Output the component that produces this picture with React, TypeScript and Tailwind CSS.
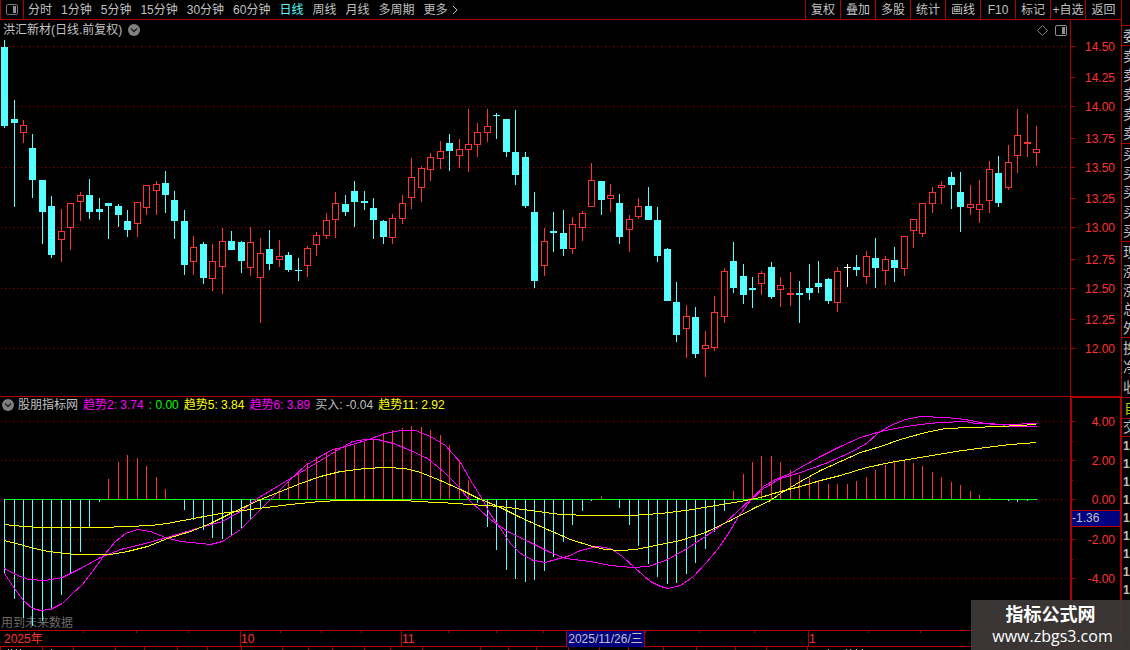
import clsx from "clsx";

type Candle = [high: number, top: number, bottom: number, low: number, kind: "u" | "d" | "w"];

const UP = "#ff3232";
const DOWN = "#54ffff";
const LINE = "#b00000";

const candles: Candle[] = [
  [40, 47, 126, 128, "d"], [100, 119, 123, 207, "d"], [120, 125, 133, 143, "u"], [134, 148, 180, 198, "d"],
  [180, 180, 212, 244, "d"], [196, 206, 255, 258, "d"], [209, 231, 240, 262, "u"], [203, 203, 228, 250, "u"],
  [192, 195, 202, 221, "u"], [179, 195, 212, 219, "d"], [198, 209, 212, 220, "d"], [203, 203, 206, 239, "d"],
  [204, 206, 215, 227, "d"], [210, 221, 230, 237, "d"], [202, 202, 224, 237, "u"], [185, 185, 208, 215, "u"],
  [181, 184, 191, 215, "u"], [171, 183, 195, 213, "d"], [191, 200, 221, 239, "d"], [210, 221, 265, 275, "d"],
  [236, 247, 262, 275, "u"], [242, 244, 278, 284, "d"], [244, 261, 279, 291, "u"], [228, 241, 267, 294, "u"],
  [231, 241, 250, 250, "d"], [241, 242, 261, 273, "d"], [227, 242, 268, 276, "u"], [238, 253, 278, 323, "u"],
  [230, 249, 264, 270, "d"], [240, 256, 260, 267, "u"], [252, 255, 270, 272, "d"], [258, 270, 271, 281, "d"],
  [246, 248, 266, 277, "u"], [232, 235, 245, 256, "u"], [213, 220, 236, 239, "u"], [192, 203, 220, 238, "u"],
  [195, 204, 212, 216, "d"], [181, 191, 202, 227, "d"], [191, 201, 203, 210, "d"], [198, 208, 220, 239, "d"],
  [220, 221, 237, 244, "d"], [214, 218, 238, 244, "u"], [195, 203, 219, 224, "u"], [158, 177, 198, 209, "u"],
  [166, 168, 188, 202, "u"], [153, 157, 170, 181, "u"], [141, 151, 159, 169, "u"], [134, 143, 151, 171, "d"],
  [139, 149, 156, 168, "u"], [109, 144, 150, 172, "u"], [123, 132, 145, 157, "u"], [109, 126, 133, 142, "u"],
  [113, 115, 116, 139, "d"], [119, 119, 152, 157, "d"], [110, 152, 175, 185, "d"], [152, 157, 206, 208, "d"],
  [192, 212, 281, 288, "d"], [228, 241, 266, 276, "u"], [212, 231, 233, 252, "d"], [210, 233, 249, 256, "d"],
  [217, 224, 249, 254, "u"], [211, 213, 228, 241, "u"], [163, 180, 207, 207, "u"], [181, 181, 200, 215, "d"],
  [184, 195, 199, 212, "u"], [194, 203, 237, 244, "d"], [215, 219, 230, 252, "u"], [198, 206, 217, 219, "u"],
  [187, 206, 220, 220, "d"], [207, 220, 256, 262, "d"], [248, 249, 301, 301, "d"], [282, 302, 335, 342, "d"],
  [305, 316, 329, 358, "u"], [307, 317, 354, 358, "d"], [331, 345, 349, 377, "u"], [296, 312, 348, 351, "u"],
  [268, 271, 317, 323, "u"], [242, 261, 288, 293, "d"], [264, 276, 295, 304, "d"], [277, 288, 290, 308, "d"],
  [271, 273, 284, 295, "u"], [262, 267, 297, 299, "d"], [277, 285, 290, 307, "u"], [272, 293, 295, 306, "u"],
  [281, 293, 295, 323, "d"], [264, 288, 293, 300, "d"], [261, 283, 287, 293, "d"], [278, 279, 301, 304, "d"],
  [267, 271, 303, 312, "u"], [264, 267, 268, 287, "w"], [255, 267, 270, 276, "d"], [251, 256, 277, 284, "u"],
  [238, 258, 268, 288, "d"], [256, 259, 271, 285, "u"], [247, 260, 268, 282, "d"], [236, 236, 269, 276, "u"],
  [219, 219, 231, 248, "u"], [203, 203, 234, 237, "u"], [187, 192, 204, 213, "u"], [181, 185, 188, 204, "u"],
  [172, 177, 185, 209, "d"], [172, 192, 207, 232, "d"], [185, 204, 208, 215, "u"], [180, 204, 210, 223, "u"],
  [161, 169, 201, 213, "u"], [156, 173, 203, 207, "d"], [145, 162, 188, 190, "u"], [109, 135, 156, 173, "u"],
  [114, 142, 144, 157, "u"], [126, 149, 153, 166, "u"],
];

// tip of every histogram bar, the base line is ZERO
const ZERO = 499;
const bars = [
  574, 599, 618, 626, 621, 610, 595, 574, 552, 527, 502, 479, 462, 455, 458, 466, 477, 489, 500, 510, 520, 530,
  538, 539, 536, 529, 519, 510, 500, 492, 482, 473, 463, 457, 452, 448, 447, 445, 442, 439, 433, 430, 428, 426,
  427, 430, 435, 445, 460, 480, 503, 527, 550, 570, 579, 582, 580, 571, 557, 542, 525, 511, 501, 496, 499, 508,
  525, 546, 564, 577, 584, 583, 574, 563, 549, 532, 511, 491, 474, 462, 456, 456, 462, 470, 475, 478, 480, 484,
  484, 484, 481, 477, 470, 465, 462, 461, 463, 466, 472, 477, 482, 485, 491, 495, 498, 499, 501, 502, 501, 500,
];

const trend11 =
  "4,524 23,526 42,527 60,527 100,527 127,526 150,525 167,523 193,518 220,513 250,509 290,504 320,501 340,500 405,500 415,501 440,502 470,504 500,506 530,510 560,514 590,515 630,515 660,513 685,510 710,506 740,501 760,497 780,491 800,486 820,480 840,475 866,467 890,462 920,457 955,451 985,447 1010,444 1036,442";
const trend5 =
  "4,540 23,545 42,550 56,552 75,554 110,554 127,551 147,546 167,538 190,531 210,523 230,513 245,506 260,499 280,491 300,483 320,476 340,471 365,468 385,467 405,468 420,472 440,480 460,489 478,498 500,507 520,517 540,526 570,539 592,546 605,549 620,550 635,549 650,546 680,540 705,532 730,520 755,507 770,500 780,493 800,481 820,470 840,461 860,452 880,446 900,439 925,432 945,428 970,427 1000,426 1036,424";
const trend2 =
  "4,573 14,588 23,600 32,608 40,610 50,609 62,603 72,593 82,584 92,571 105,553 115,541 125,533 137,529 150,531 165,537 180,541 210,544 222,541 240,529 260,509 270,499 280,489 292,477 305,465 315,459 330,450 345,446 365,440 385,433 400,430 415,430 430,436 445,445 460,462 472,483 482,499 490,514 500,528 510,543 520,553 533,560 545,562 555,559 567,556 580,550 597,546 610,548 622,556 635,568 650,581 660,586 668,588 680,585 693,576 705,563 717,549 728,533 738,516 750,500 763,488 780,478 800,472 825,463 850,452 866,443 877,433 890,425 905,419 920,416 945,417 965,419 985,423 1004,424 1021,424 1022,423 1036,423";
const trend6 =
  "4,568 15,574 28,579 45,580 62,577 80,568 100,557 120,549 145,543 170,536 200,527 222,521 240,511 257,498 280,484 300,472 320,460 335,451 345,445 352,441 365,439 377,439 393,443 410,450 427,458 443,471 458,486 470,501 490,519 507,531 530,542 550,552 565,558 590,561 610,565 632,567 648,566 665,560 685,549 705,536 725,522 738,510 750,499 763,486 775,479 790,473 800,467 820,456 840,446 860,437 880,431 900,427 920,424 940,422 965,421 975,423 1003,424 1004,426 1036,426";

const priceLabels: [string, number][] = [
  ["14.50", 46], ["14.25", 77], ["14.00", 106], ["13.75", 138], ["13.50", 167], ["13.25", 198],
  ["13.00", 227], ["12.75", 259], ["12.50", 288], ["12.25", 319], ["12.00", 348],
];
const trendLabels: [string, number][] = [
  ["4.00", 421], ["2.00", 460], ["0.00", 499], ["-2.00", 539], ["-4.00", 578],
];

const periods = ["分时", "1分钟", "5分钟", "15分钟", "30分钟", "60分钟", "日线", "周线", "月线", "多周期"];
const tools = ["复权", "叠加", "多股", "统计", "画线", "F10", "标记", "+自选"];

const quoteGroups = [
  { rows: ["委"], height: "h-[20px]" },
  { rows: ["卖", "卖", "卖", "卖", "卖"], height: "h-[98px]" },
  { rows: ["买", "买", "买", "买", "买"], height: "h-[98px]" },
  { rows: ["现", "涨", "涨", "总", "外"], height: "h-[96px]" },
  { rows: ["换", "净", "收"], height: "h-[60px]" },
];

const xOf = (i: number) => Math.round(4.04 + i * 9.468);

function Grid({ ys }: { ys: number[] }) {
  return (
    <>
      {ys.map((y) => (
        <line key={y} x1="1" x2="1068" y1={y + 0.5} y2={y + 0.5} stroke="#a00000" strokeDasharray="1 3" />
      ))}
    </>
  );
}

function CandleChart() {
  return (
    <svg className="block h-full w-full" viewBox="0 40 1070 356" preserveAspectRatio="none" shapeRendering="crispEdges">
      <Grid ys={[46, 106, 167, 227, 288, 348]} />
      {candles.map(([high, top, bottom, low, kind], i) => {
        const x = xOf(i);
        const color = kind === "u" ? UP : kind === "d" ? DOWN : "#ffffff";
        const hollow = kind === "u" && bottom - top > 2;
        return (
          <g key={i} fill={color}>
            <rect x={x} y={high} width="1" height={top - high} />
            <rect x={x} y={bottom} width="1" height={low - bottom} />
            {hollow ? (
              <rect x={x - 2.5} y={top + 0.5} width="6" height={bottom - top - 1} fill="none" stroke={color} />
            ) : (
              <rect x={x - 3} y={top} width="7" height={bottom - top} />
            )}
          </g>
        );
      })}
    </svg>
  );
}

function TrendChart() {
  return (
    <svg className="block h-full w-full" viewBox="0 413 1070 217" preserveAspectRatio="none" shapeRendering="crispEdges">
      <Grid ys={[421, 460, 499, 539, 578]} />
      <text x="1" y="627" fontSize="12" fill="#6b6b6b">用到未来数据</text>
      <rect x="4" y={ZERO} width="1033" height="1" fill="#00ff00" />
      {bars.map((y, i) => (
        <rect
          key={i}
          x={xOf(i)}
          y={Math.min(y, ZERO)}
          width="1"
          height={Math.abs(y - ZERO)}
          fill={y > ZERO ? DOWN : UP}
        />
      ))}
      <g fill="none" transform="translate(0.5 0.5)">
        <polyline points={trend2} stroke="#ff00ff" />
        <polyline points={trend6} stroke="#ff00ff" />
        <polyline points={trend5} stroke="#ffff00" />
        <polyline points={trend11} stroke="#ffff00" />
      </g>
    </svg>
  );
}

function AxisLabels({ labels, minor }: { labels: [string, number][]; minor?: number[] }) {
  return (
    <>
      {labels.map(([text, y]) => (
        <g key={text}>
          <rect x="0" y={y} width="4" height="1" fill={LINE} />
          <text x="44" y={y + 5} fontSize="12" textAnchor="end" fill={UP}>{text}</text>
        </g>
      ))}
      {minor?.map((y) => <rect key={y} x="0" y={y} width="2" height="1" fill={LINE} />)}
    </>
  );
}

function MenuDot({ label }: { label: string }) {
  return (
    <button aria-label={label} className="shrink-0">
      <svg width="12" height="12" viewBox="0 0 12 12">
        <circle cx="6" cy="6" r="6" fill="#808080" />
        <path d="M3 4.5 6 7.5 9 4.5" fill="none" stroke="#202020" strokeWidth="1.4" />
      </svg>
    </button>
  );
}

function PanelIcon({ dim }: { dim?: boolean }) {
  return (
    <svg width="12" height="11" viewBox="0 0 12 11">
      <rect x="0.5" y="0.5" width="11" height="10" rx="1.5" fill="none" stroke={dim ? "#777" : "#909090"} />
      <rect x="7" y="2" width="3" height="7" fill="#909090" />
    </svg>
  );
}

function Header() {
  return (
    <header className="flex h-5 shrink-0 justify-between border-b border-[#b00000] whitespace-nowrap">
      <nav className="flex items-center gap-[9px]">
        <button aria-label="侧栏" className="-mr-[5px] flex h-full w-6 items-center justify-center border-x border-[#b00000]">
          <PanelIcon dim />
        </button>
        {periods.map((p) => (
          <button key={p} className={clsx(p === "日线" && "text-[#54ffff]")}>
            {p}
          </button>
        ))}
        <button className="flex items-center gap-1">
          更多
          <svg width="6" height="10" viewBox="0 0 6 10">
            <path d="M1 1 5 5 1 9" fill="none" stroke="#c0c0c0" />
          </svg>
        </button>
      </nav>
      <div className="flex">
        {tools.map((tool) => (
          <button key={tool} className="w-[35px] border-l border-[#b00000]">
            {tool}
          </button>
        ))}
        <button className="w-9 border-l border-[#b00000]">返回</button>
      </div>
    </header>
  );
}

function DateAxis() {
  return (
    <div className="relative grid h-4 shrink-0 grid-cols-[240fr_161fr_165fr_79fr_163fr_313fr] border-b border-[#b00000] leading-4 text-[#ff3232]">
      <span className="pl-1">2025年</span>
      <span className="border-l border-[#b00000]">10</span>
      <span className="border-l border-[#b00000]">11</span>
      <span className="border-x border-[#b00000] bg-[#000080] text-center whitespace-nowrap text-[#c0c0c0]">
        2025/11/26/三
      </span>
      <span />
      <span className="border-l border-[#b00000]">1</span>
      <svg className="absolute inset-0 h-full w-full" viewBox="0 0 1121 15" preserveAspectRatio="none" shapeRendering="crispEdges">
        {[83, 136, 188, 280, 321, 361, 448, 496, 543, 645, 699, 754, 868, 920].map((x) => (
          <rect key={x} x={x} y="0" width="1" height="2" fill={LINE} />
        ))}
      </svg>
    </div>
  );
}

function BottomTicks() {
  return (
    <svg className="block h-[3px] w-full shrink-0" viewBox="0 0 1121 3" preserveAspectRatio="none" shapeRendering="crispEdges">
      {[0, 42, 73, 115, 144, 177, 207, 241, 282, 308, 332, 364, 390, 422, 480, 508, 536, 568, 599, 628, 663, 696, 735, 766, 807].map((x) => (
        <rect key={x} x={x} y="0" width="1" height="3" fill={LINE} />
      ))}
      {[8, 11, 16, 20, 51, 828, 846, 850, 856, 862].map((x) => (
        <rect key={x} x={x} y="2" width="1" height="1" fill="#c0c0c0" />
      ))}
    </svg>
  );
}

function QuoteSidebar() {
  return (
    <aside className="flex w-[9px] shrink-0 flex-col overflow-hidden border-l border-[#b00000] pt-[25px]">
      {quoteGroups.map(({ rows, height }) => (
        <div key={rows[0]} className={clsx("flex shrink-0 flex-col justify-around border-t border-[#b00000] pl-px text-sm leading-4", height)}>
          {rows.map((row, i) => (
            <span key={i} className="w-4">{row}</span>
          ))}
        </div>
      ))}
      <div className="h-[21px] shrink-0 border-t border-[#b00000] pl-0.5 text-sm leading-5 text-[#c8c800]">
        <span className="block w-4">自</span>
      </div>
      <div className="h-[19px] shrink-0 border-y border-[#b00000] pl-px text-sm leading-4">
        <span className="block w-4">交</span>
      </div>
      <div className="flex flex-col pl-px font-bold leading-[18px]">
        {Array.from({ length: 9 }, (_, i) => (
          <span key={i}>1</span>
        ))}
      </div>
    </aside>
  );
}

export default function App() {
  return (
    <div className="relative flex h-screen overflow-hidden bg-black font-['Liberation_Sans','Noto_Sans_CJK_SC',sans-serif] text-xs text-[#c0c0c0]">
      <main className="flex min-w-0 flex-1 flex-col">
        <Header />

        <section className="flex min-h-0 flex-1 border-b border-[#b00000]">
          <div className="flex min-w-0 flex-1 flex-col">
            <div className="flex h-5 shrink-0 items-center justify-between pr-[3px] pl-[3px]">
              <h1 className="flex items-center gap-1.5">
                洪汇新材(日线.前复权)
                <MenuDot label="股票菜单" />
              </h1>
              <div className="flex items-center gap-[7px]">
                <svg width="11" height="11" viewBox="0 0 11 11">
                  <path d="M5.5 0.5 10.5 5.5 5.5 10.5 0.5 5.5Z" fill="none" stroke="#808080" />
                </svg>
                <PanelIcon />
              </div>
            </div>
            <div className="min-h-0 flex-1">
              <CandleChart />
            </div>
          </div>
          <svg className="block h-full w-[51px] shrink-0 border-l border-[#b00000]" viewBox="0 20 50 376" preserveAspectRatio="none">
            <AxisLabels labels={priceLabels} />
          </svg>
        </section>

        <section className="flex h-[234px] shrink-0 border-b border-[#b00000]">
          <div className="flex min-w-0 flex-1 flex-col">
            <div className="flex h-4 shrink-0 items-center gap-1 pl-0.5 whitespace-nowrap">
              <MenuDot label="指标菜单" />
              <div className="flex gap-[5px]">
                <span>股朋指标网</span>
                <span className="text-[#ff00ff]">趋势2: 3.74</span>
                <span className="text-[#00ff00]">: 0.00</span>
                <span className="text-[#ffff00]">趋势5: 3.84</span>
                <span className="text-[#ff00ff]">趋势6: 3.89</span>
                <span>买入: -0.04</span>
                <span className="text-[#ffff00]">趋势11: 2.92</span>
              </div>
            </div>
            <div className="min-h-0 flex-1">
              <TrendChart />
            </div>
          </div>
          <svg
            className="block h-full w-[51px] shrink-0 border-t border-r border-l-2 border-[#b00000]"
            viewBox="1 398 48 232"
            preserveAspectRatio="none"
          >
            <AxisLabels labels={trendLabels} minor={[441, 480, 559]} />
            <rect x="0" y="510" width="50" height="17" fill={LINE} />
            <rect x="0" y="511" width="50" height="15" fill="#000080" />
            <text x="1" y="522" fontSize="12" fill="#c0c0c0">-1.36</text>
          </svg>
        </section>

        <DateAxis />
        <BottomTicks />
      </main>

      <QuoteSidebar />

      <div className="absolute right-0 bottom-0 flex h-[50px] w-[159px] flex-col items-center bg-[#3c3837]/95 pt-1 text-white">
        <strong className="text-lg leading-[22px]">指标公式网</strong>
        <span className="pl-1 font-['Open_Sans',sans-serif] text-base leading-5">www.zbgs3.com</span>
      </div>
    </div>
  );
}
